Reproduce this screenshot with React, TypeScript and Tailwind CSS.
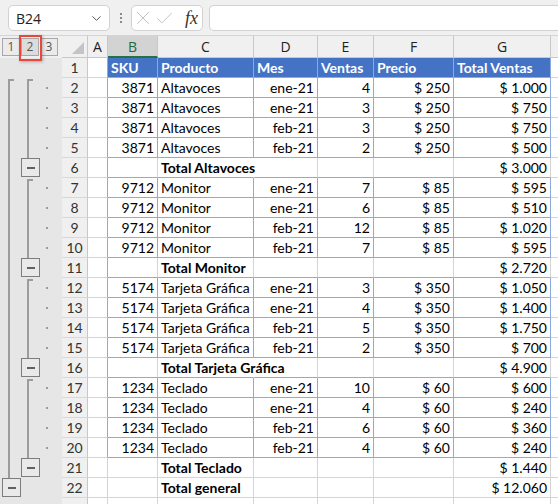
import { ChevronDown, X, Check } from "lucide-react";

type Kind = "head" | "data" | "total" | "grand";

interface Row {
  n: number;
  kind: Kind;
  sku?: string;
  prod?: string;
  mes?: string;
  ventas?: string;
  precio?: string;
  total?: string;
}

const rows: Row[] = [
  { n: 1, kind: "head" },
  { n: 2, kind: "data", sku: "3871", prod: "Altavoces", mes: "ene-21", ventas: "4", precio: "$ 250", total: "$ 1.000" },
  { n: 3, kind: "data", sku: "3871", prod: "Altavoces", mes: "ene-21", ventas: "3", precio: "$ 250", total: "$ 750" },
  { n: 4, kind: "data", sku: "3871", prod: "Altavoces", mes: "feb-21", ventas: "3", precio: "$ 250", total: "$ 750" },
  { n: 5, kind: "data", sku: "3871", prod: "Altavoces", mes: "feb-21", ventas: "2", precio: "$ 250", total: "$ 500" },
  { n: 6, kind: "total", prod: "Total Altavoces", total: "$ 3.000" },
  { n: 7, kind: "data", sku: "9712", prod: "Monitor", mes: "ene-21", ventas: "7", precio: "$ 85", total: "$ 595" },
  { n: 8, kind: "data", sku: "9712", prod: "Monitor", mes: "ene-21", ventas: "6", precio: "$ 85", total: "$ 510" },
  { n: 9, kind: "data", sku: "9712", prod: "Monitor", mes: "feb-21", ventas: "12", precio: "$ 85", total: "$ 1.020" },
  { n: 10, kind: "data", sku: "9712", prod: "Monitor", mes: "feb-21", ventas: "7", precio: "$ 85", total: "$ 595" },
  { n: 11, kind: "total", prod: "Total Monitor", total: "$ 2.720" },
  { n: 12, kind: "data", sku: "5174", prod: "Tarjeta Gráfica", mes: "ene-21", ventas: "3", precio: "$ 350", total: "$ 1.050" },
  { n: 13, kind: "data", sku: "5174", prod: "Tarjeta Gráfica", mes: "ene-21", ventas: "4", precio: "$ 350", total: "$ 1.400" },
  { n: 14, kind: "data", sku: "5174", prod: "Tarjeta Gráfica", mes: "feb-21", ventas: "5", precio: "$ 350", total: "$ 1.750" },
  { n: 15, kind: "data", sku: "5174", prod: "Tarjeta Gráfica", mes: "feb-21", ventas: "2", precio: "$ 350", total: "$ 700" },
  { n: 16, kind: "total", prod: "Total Tarjeta Gráfica", total: "$ 4.900" },
  { n: 17, kind: "data", sku: "1234", prod: "Teclado", mes: "ene-21", ventas: "10", precio: "$ 60", total: "$ 600" },
  { n: 18, kind: "data", sku: "1234", prod: "Teclado", mes: "ene-21", ventas: "4", precio: "$ 60", total: "$ 240" },
  { n: 19, kind: "data", sku: "1234", prod: "Teclado", mes: "feb-21", ventas: "6", precio: "$ 60", total: "$ 360" },
  { n: 20, kind: "data", sku: "1234", prod: "Teclado", mes: "feb-21", ventas: "4", precio: "$ 60", total: "$ 240" },
  { n: 21, kind: "grand", prod: "Total Teclado", total: "$ 1.440" },
  { n: 22, kind: "grand", prod: "Total general", total: "$ 12.060" },
  { n: 23, kind: "grand" },
];

const cols = [
  { key: "A", w: "w-[20px]" },
  { key: "B", w: "w-[50px]" },
  { key: "C", w: "w-[96px]" },
  { key: "D", w: "w-[64px]" },
  { key: "E", w: "w-[56px]" },
  { key: "F", w: "w-[80px]" },
  { key: "G", w: "w-[97px]" },
];

const rightColor = {
  blue: "border-r-[#8ea9db]",
  gray: "border-r-[#d4d4d4]",
  none: "border-r-transparent",
};
const bottomColor = {
  blue: "border-b-[#8ea9db]",
  gray: "border-b-[#d4d4d4]",
};

function Cell({
  w,
  right,
  bottom,
  align = "left",
  bold,
  fill,
  children,
}: {
  w: string;
  right: keyof typeof rightColor;
  bottom: keyof typeof bottomColor;
  align?: "left" | "right";
  bold?: boolean;
  fill?: boolean;
  children?: React.ReactNode;
}) {
  return (
    <div
      className={`${w} h-[20px] shrink-0 border-r border-b ${rightColor[right]} ${bottomColor[bottom]} ${
        fill ? "bg-[#4472c4] text-white" : ""
      } ${bold ? "font-bold" : ""} ${
        align === "right" ? "text-right pr-[3px]" : "pl-[3px]"
      } whitespace-nowrap leading-[20px]`}
    >
      {children}
    </div>
  );
}

function TopBar() {
  return (
    <div className="h-[36px] bg-[#f0f0f0] border-b border-[#d4d4d4] flex items-start pt-[5px] pl-[8px]">
      <div className="w-[102px] h-[26px] rounded-[5px] border border-[#d2d2d2] bg-white flex items-center justify-between pl-[7px] pr-[5px] font-['Open_Sans',sans-serif] text-[14px] text-[#222]">
        <span>B24</span>
        <ChevronDown size={15} strokeWidth={1.6} className="text-[#555]" />
      </div>
      <div className="ml-[9px] w-[3px] h-[26px] flex flex-col items-center justify-center gap-[2px]">
        <span className="w-[2px] h-[2px] bg-[#8a8a8a]" />
        <span className="w-[2px] h-[2px] bg-[#8a8a8a]" />
        <span className="w-[2px] h-[2px] bg-[#8a8a8a]" />
      </div>
      <div className="ml-[9px] w-[72px] h-[26px] rounded-[5px] border border-[#d2d2d2] bg-white flex items-center">
        <X size={22} strokeWidth={0.9} className="text-[#b4b4b4]" />
        <Check size={21} strokeWidth={0.9} className="text-[#b4b4b4]" />
        <span className="ml-[10px] font-['Liberation_Serif',serif] italic text-[18px] text-[#333] leading-none">
          fx
        </span>
      </div>
      <div className="ml-[6px] flex-1 h-[26px] rounded-l-[5px] border border-r-0 border-[#d2d2d2] bg-white" />
    </div>
  );
}

function Outline() {
  const starts = [1, 6, 11, 16];
  const buttons = [5, 10, 15, 20];
  const dotRows = [1, 2, 3, 4, 6, 7, 8, 9, 11, 12, 13, 14, 16, 17, 18, 19];
  return (
    <div className="w-[62px] shrink-0 flex flex-col">
      <div className="h-[22px] bg-[#f0f0f0] relative flex gap-[1px] pl-[2px] pt-[2px]">
        {["1", "2", "3"].map((l) => (
          <div
            key={l}
            className={`w-[18px] h-[18px] border border-[#a8a8a8] flex items-center justify-center text-[12px] text-[#555] font-['Open_Sans',sans-serif] ${
              l === "2" ? "bg-[#dcdcdc]" : "bg-[#ebebeb]"
            }`}
          >
            {l}
          </div>
        ))}
        <div className="absolute left-[19px] top-[-1px] w-[23px] h-[26px] border-[2.5px] border-[#e9463c] shadow-[1px_1px_3px_rgba(0,0,0,0.25)]" />
      </div>
      <div className="flex-1 bg-[#e6e6e6]">
        <svg width="62" height="446" className="block">
          <rect x="8" y="21" width="2" height="399" fill="#9c9c9c" />
          <rect x="8" y="21" width="6" height="2" fill="#9c9c9c" />
          {starts.map((s, i) => {
            const top = s * 20 + 1;
            const btn = buttons[i] * 20;
            return (
              <g key={s}>
                <rect x="27" y={top} width="2" height={btn - top} fill="#9c9c9c" />
                <rect x="27" y={top} width="6" height="2" fill="#9c9c9c" />
                <rect x="21.5" y={btn + 0.5} width="18" height="18" fill="#e9e9e9" stroke="#7d7d7d" />
                <rect x="27" y={btn + 9} width="8" height="2" fill="#606060" />
              </g>
            );
          })}
          {dotRows.map((r) => (
            <rect key={r} x="46" y={r * 20 + 9} width="2" height="2" fill="#9c9c9c" />
          ))}
          <rect x="2.5" y="420.5" width="18" height="18" fill="#e9e9e9" stroke="#7d7d7d" />
          <rect x="8" y="429" width="8" height="2" fill="#606060" />
        </svg>
      </div>
    </div>
  );
}

function HeaderRow() {
  return (
    <div className="flex h-[22px] bg-[#f0f0f0] font-['Open_Sans',sans-serif] text-[14px] text-[#222]">
      <div className="w-[26px] shrink-0 border-r border-b border-[#c8c8c8] relative">
        <svg width="26" height="22" className="block">
          <polygon points="10,18 22,18 22,6" fill="#c4c4c4" />
        </svg>
      </div>
      {cols.map((c) =>
        c.key === "B" ? (
          <div
            key={c.key}
            className={`${c.w} shrink-0 border-r border-[#c8c8c8] border-b-2 border-b-[#217346] bg-[#d3d3d3] text-[#1e6b40] flex items-center justify-center`}
          >
            {c.key}
          </div>
        ) : (
          <div
            key={c.key}
            className={`${c.w} shrink-0 border-r border-b border-[#c8c8c8] flex items-center justify-center`}
          >
            {c.key}
          </div>
        )
      )}
      <div className="flex-1 border-b border-[#c8c8c8]" />
    </div>
  );
}

function SheetRow({ r, next }: { r: Row; next?: Row }) {
  const inTable = r.kind === "head" || r.kind === "data";
  const nextTable = next ? next.kind === "data" : false;
  const side: "blue" | "gray" = inTable ? "blue" : "gray";
  const bottom: "blue" | "gray" = inTable || nextTable ? "blue" : "gray";
  const aRight: "blue" | "gray" = r.n <= 20 ? "blue" : "gray";
  const cRight = r.kind === "total" && r.n !== 11 ? "none" : side;
  const head = r.kind === "head";
  const bold = r.kind === "total" || r.kind === "grand";

  return (
    <div className="flex h-[20px]">
      <div className="w-[26px] shrink-0 h-[20px] bg-[#f0f0f0] border-r border-b border-r-[#c8c8c8] border-b-[#d8d8d8] text-center text-[#333] leading-[20px]">
        {r.n <= 22 ? r.n : ""}
      </div>
      <Cell w="w-[20px]" right={aRight} bottom="gray" />
      <Cell w="w-[50px]" right={side} bottom={bottom} align={head ? "left" : "right"} bold={head} fill={head}>
        {head ? "SKU" : r.sku}
      </Cell>
      <Cell w="w-[96px]" right={cRight} bottom={bottom} bold={head || bold} fill={head}>
        {head ? "Producto" : r.prod}
      </Cell>
      <Cell w="w-[64px]" right={side} bottom={bottom} align={head ? "left" : "right"} bold={head} fill={head}>
        {head ? "Mes" : r.mes}
      </Cell>
      <Cell w="w-[56px]" right={side} bottom={bottom} align={head ? "left" : "right"} bold={head} fill={head}>
        {head ? "Ventas" : r.ventas}
      </Cell>
      <Cell w="w-[80px]" right={side} bottom={bottom} align={head ? "left" : "right"} bold={head} fill={head}>
        {head ? "Precio" : r.precio}
      </Cell>
      <Cell w="w-[97px]" right={side} bottom={bottom} align={head ? "left" : "right"} bold={head} fill={head}>
        {head ? "Total Ventas" : r.total}
      </Cell>
      <div className="flex-1 h-[20px] border-b border-[#d4d4d4]" />
    </div>
  );
}

export default function App() {
  return (
    <div className="w-[558px] h-[504px] overflow-hidden bg-white font-['Lato',sans-serif] text-[14px] text-black">
      <TopBar />
      <div className="flex">
        <Outline />
        <div className="flex-1 flex flex-col">
          <HeaderRow />
          {rows.map((r, i) => (
            <SheetRow key={r.n} r={r} next={rows[i + 1]} />
          ))}
        </div>
      </div>
    </div>
  );
}
